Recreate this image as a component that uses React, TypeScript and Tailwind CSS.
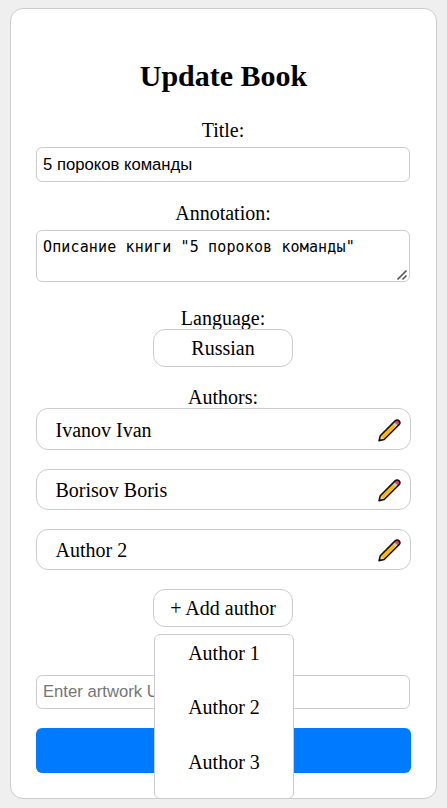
import React from "react";

const authors = [
  { name: "Ivanov Ivan", height: "h-[42px]" },
  { name: "Borisov Boris", height: "h-[41px]" },
  { name: "Author 2", height: "h-[41px]" },
];

const options = ["Author 1", "Author 2", "Author 3"];

function Pencil() {
  return (
    <svg width="23" height="23" viewBox="0.3 0.6 23.4 23.4" className="block">
      <path d="M1.4 22.6 2.6 17.6 17.7 2.5c1.2-1.2 2.9-1.2 4 0s1.1 2.8 0 4L6.6 21.5Z" fill="#ffb900" />
      <path d="M1.4 22.6 2.6 17.6 6.6 21.5Z" fill="#f5d3b3" />
      <path d="m14.9 5.3 4 4 2.4-2.4-4-4Z" fill="#c4ccd2" />
      <path d="m16.7 3.5 4 4 1-1c1.1-1.2 1.1-2.9 0-4s-2.8-1.2-4 0Z" fill="#ef3e4e" />
      <path
        d="M1.4 22.6 2.6 17.6 17.7 2.5c1.2-1.2 2.9-1.2 4 0s1.1 2.8 0 4L6.6 21.5Z"
        fill="none"
        stroke="#111"
        strokeWidth="1.6"
        strokeLinejoin="round"
      />
      <path d="M1 23 1.7 20.6 3.6 22.4Z" fill="#111" />
    </svg>
  );
}

export default function App() {
  return (
    <div className="h-[808px] bg-[#efefef] pt-2 pl-[10px] font-['Liberation_Serif',serif] text-[20px] leading-[23px] text-black">
      <form className="flex h-[791px] w-[427px] flex-col items-center rounded-[13px] border border-[#ccc] bg-white px-[25px] pt-[50px]">
        <h2 className="text-[30px] leading-[34px] font-bold">Update Book</h2>

        <label className="mt-[26px] mr-px">Title:</label>
        <input
          defaultValue="5 пороков команды"
          className="mt-[5px] h-[35px] w-[374px] self-start rounded-[6px] border border-[#ccc] px-[6px] font-['Liberation_Sans',sans-serif] text-[16.67px] outline-none"
        />

        <label className="mt-[20px] mr-px">Annotation:</label>
        <div className="relative mt-[5px] h-[52px] w-[374px] self-start">
          <textarea
            defaultValue={'Описание книги "5 пороков команды"'}
            className="block h-full w-full resize-none overflow-hidden rounded-[6px] border border-[#ccc] px-[6px] py-[6px] font-['DejaVu_Sans_Mono',monospace] text-[15px] leading-[20px] tracking-[0.14px] outline-none"
          />
          <svg width="12" height="12" viewBox="0 0 12 12" className="absolute right-[2px] bottom-[1px]">
            <path d="M1.5 10.5 10.5 1.5M6.5 10.5l4-4" stroke="#555" strokeWidth="1.6" />
          </svg>
        </div>

        <label className="mt-[25px] mr-px">Language:</label>
        <button type="button" className="-mt-px mr-px h-[38px] w-[140px] rounded-[12px] border border-[#ccc]">
          Russian
        </button>

        <label className="mt-[19px] mr-px">Authors:</label>
        <div className="-mt-px flex w-full flex-col gap-[19px]">
          {authors.map((a) => (
            <div
              key={a.name}
              className={`${a.height} flex items-center justify-between rounded-[12px] border border-[#ccc] pt-[2px] pr-[9px] pl-[18.5px]`}
            >
              <span>{a.name}</span>
              <Pencil />
            </div>
          ))}
        </div>

        <div className="relative mt-[19px] mr-px">
          <button type="button" className="block h-[38px] w-[140px] rounded-[12px] border border-[#ccc]">
            + Add author
          </button>
          <ul className="absolute top-[45px] left-px z-10 h-[165px] w-[140px] rounded-[6px] border border-[#ccc] bg-white pt-[7px] text-center">
            {options.map((o) => (
              <li key={o} className="h-[54.4px]">
                {o}
              </li>
            ))}
          </ul>
        </div>

        <input
          placeholder="Enter artwork URL"
          className="mt-[48px] h-[34px] w-[374px] shrink-0 self-start rounded-[6px] border border-[#ccc] px-[6px] font-['Liberation_Sans',sans-serif] text-[16.67px] outline-none placeholder:text-[#757575]"
        />
        <button type="submit" aria-label="Update" className="mt-[19px] h-[45px] w-full shrink-0 rounded-[6px] bg-[#007bff]" />
      </form>
    </div>
  );
}
